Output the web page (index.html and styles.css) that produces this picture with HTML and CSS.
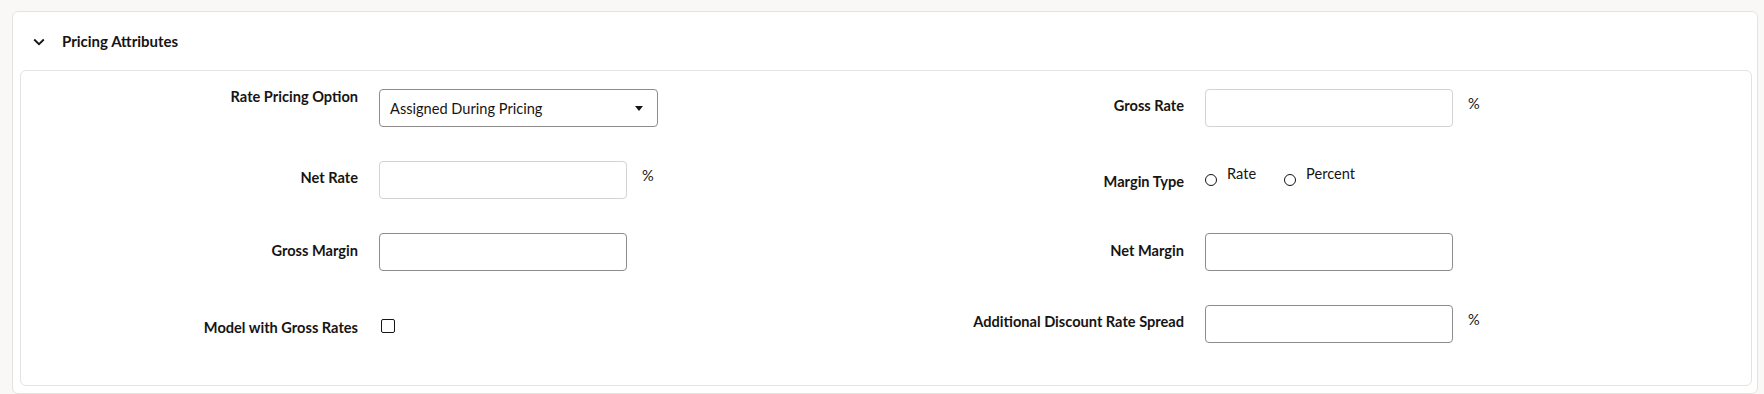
FILE: index.html
```html
<!DOCTYPE html>
<html lang="en">
<head>
    <meta charset="UTF-8">
    <meta name="viewport" content="width=device-width, initial-scale=1.0">
    <title>Pricing Attributes</title>
    <link rel="stylesheet" href="styles.css">
</head>
<body>
    <div class="card">
        <div class="card-header">
            <svg class="chevron" width="12" height="8" viewBox="0 0 12 8">
                <path d="M1.2 1.5 L6 6.2 L10.8 1.5" fill="none" stroke="#161513" stroke-width="1.8"/>
            </svg>
            <span class="card-title">Pricing Attributes</span>
        </div>

        <div class="panel">
            <div class="form-grid">
                <!-- row 1 -->
                <div class="field-row">
                    <label class="field-label label-top">Rate Pricing Option</label>
                    <div class="select-box">
                        <span>Assigned During Pricing</span>
                        <span class="caret"></span>
                    </div>
                </div>
                <div class="field-row">
                    <label class="field-label label-up">Gross Rate</label>
                    <div class="text-input readonly"></div>
                    <span class="unit">%</span>
                </div>

                <!-- row 2 -->
                <div class="field-row">
                    <label class="field-label label-up">Net Rate</label>
                    <div class="text-input readonly"></div>
                    <span class="unit">%</span>
                </div>
                <div class="field-row">
                    <label class="field-label label-down">Margin Type</label>
                    <div class="radio-set">
                        <span class="radio-item"><span class="radio"></span>Rate</span>
                        <span class="radio-item"><span class="radio"></span>Percent</span>
                    </div>
                </div>

                <!-- row 3 -->
                <div class="field-row">
                    <label class="field-label label-up1">Gross Margin</label>
                    <div class="text-input"></div>
                </div>
                <div class="field-row">
                    <label class="field-label label-up1">Net Margin</label>
                    <div class="text-input"></div>
                </div>

                <!-- row 4 -->
                <div class="field-row">
                    <label class="field-label label-down2">Model with Gross Rates</label>
                    <span class="checkbox"></span>
                </div>
                <div class="field-row">
                    <label class="field-label label-up">Additional Discount Rate Spread</label>
                    <div class="text-input"></div>
                    <span class="unit">%</span>
                </div>
            </div>
        </div>
    </div>
</body>
</html>
```

FILE: styles.css
```css
body {
    font-family: Lato, "Noto Sans", Arial, sans-serif;
    font-size: 14.6px;
    color: #161513;
    background-color: #f9f8f6;
    margin: 0;
    padding: 11px 6px 2px 12px;
}
.card {
    background-color: white;
    border: 1px solid #e4e3e1;
    border-radius: 6px;
    padding: 0 5px 7px 7px;
}
.card-header {
    display: flex;
    align-items: center;
    height: 58px;
    padding-left: 13px;
}
.chevron {
    margin-right: 17px;
    margin-top: 2px;
}
.card-title {
    font-weight: bold;
    font-size: 15px;
}
.panel {
    border: 1px solid #e4e3e1;
    border-radius: 6px;
    padding: 18px 0 42px 39px;
}
.form-grid {
    display: grid;
    grid-template-columns: 826px 826px;
    grid-template-rows: repeat(4, 38px);
    row-gap: 34px;
}
.field-row {
    display: flex;
    align-items: center;
}
.field-label {
    width: 298px;
    padding-right: 21px;
    text-align: right;
    font-weight: bold;
    line-height: 16px;
    flex-shrink: 0;
}
.label-top {
    align-self: flex-start;
}
.label-up {
    padding-bottom: 4px;
}
.label-up1 {
    padding-bottom: 2px;
}
.label-down {
    padding-top: 4px;
}
.label-down2 {
    padding-top: 8px;
}
.select-box {
    box-sizing: border-box;
    width: 279px;
    height: 38px;
    border: 1px solid #8d8c8a;
    border-radius: 4px;
    display: flex;
    align-items: center;
    justify-content: space-between;
    padding: 0 14px 0 10px;
}
.caret {
    width: 0;
    height: 0;
    border-left: 4.5px solid transparent;
    border-right: 4.5px solid transparent;
    border-top: 5px solid #161513;
}
.text-input {
    box-sizing: border-box;
    width: 248px;
    height: 38px;
    border: 1px solid #8d8c8a;
    border-radius: 4px;
}
.text-input.readonly {
    border-color: #d4d3d1;
}
.unit {
    margin-left: 15px;
    padding-bottom: 9px;
}
.radio-set {
    display: flex;
    gap: 28px;
    padding-bottom: 8.5px;
}
.radio-item {
    display: flex;
    align-items: flex-start;
    line-height: 16px;
}
.radio {
    box-sizing: border-box;
    width: 12px;
    height: 12px;
    border: 1px solid #161513;
    border-radius: 50%;
    margin-top: 7.5px;
    margin-right: 10px;
}
.checkbox {
    box-sizing: border-box;
    width: 14px;
    height: 14px;
    border: 1px solid #161513;
    border-radius: 2px;
    margin-left: 2px;
    margin-top: 4px;
}
```
